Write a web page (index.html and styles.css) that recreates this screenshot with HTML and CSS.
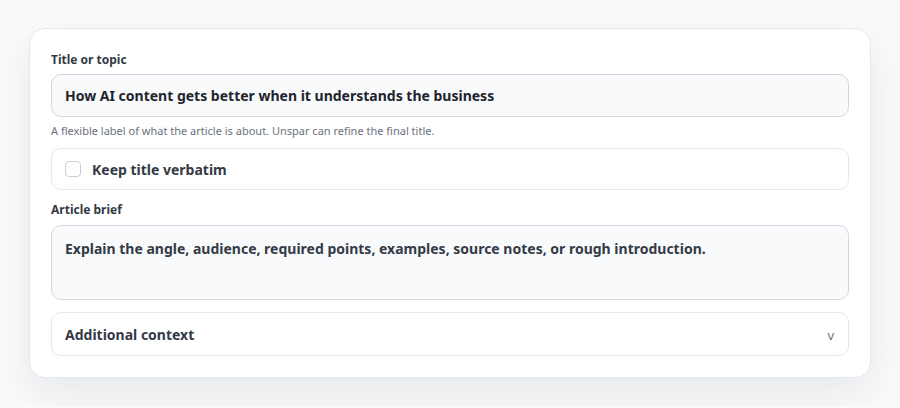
FILE: index.html
```html
<!DOCTYPE html>
<html lang="en">

<head>
    <meta charset="UTF-8">
    <meta name="viewport" content="width=device-width, initial-scale=1.0">
    <title>New article</title>

    <link rel="stylesheet" href="styles.css">
</head>

<body>
    <div class="card">
        <label class="label" for="title">Title or topic</label>
        <div class="input" id="title">How AI content gets better when it understands the business</div>
        <p class="help">A flexible label of what the article is about. Unspar can refine the final title.</p>

        <div class="box check-row">
            <span class="checkbox"></span>
            <span>Keep title verbatim</span>
        </div>

        <label class="label brief-label" for="brief">Article brief</label>
        <div class="input textarea" id="brief">Explain the angle, audience, required points, examples, source notes, or rough introduction.</div>

        <div class="box details">
            <span>Additional context</span>
            <span class="chevron">v</span>
        </div>
    </div>
</body>

</html>
```

FILE: styles.css
```css
* {
    margin: 0;
    padding: 0;
    box-sizing: border-box;
}

body {
    font-family: "Noto Sans", sans-serif;
    background-color: #fafafb;
    padding: 28px 29px;
    color: #2b303b;
}

.card {
    display: flex;
    flex-direction: column;
    background-color: #ffffff;
    border: 1px solid #e3e8f0;
    border-radius: 16px;
    padding: 23px 21px 21px;
    box-shadow: 0 16px 40px rgba(15, 23, 42, 0.08);
}

.label {
    display: block;
    font-size: 12px;
    font-weight: 700;
    line-height: 16px;
    color: #343944;
    margin-bottom: 6px;
}

.input {
    height: 43px;
    display: flex;
    align-items: center;
    padding: 0 13px;
    background-color: #f8fafc;
    border: 1px solid #d4d8de;
    border-radius: 10px;
    font-size: 14px;
    font-weight: 700;
    color: #1f242d;
}

.help {
    font-size: 11px;
    line-height: 18px;
    color: #6b717c;
    margin: 5px 0 8px;
}

.box {
    height: 42px;
    display: flex;
    align-items: center;
    padding: 0 13px;
    border: 1px solid #e6e8ec;
    border-radius: 10px;
    font-size: 14px;
    font-weight: 700;
    color: #343a46;
}

.check-row {
    gap: 11px;
}

.checkbox {
    width: 16px;
    height: 16px;
    border: 1px solid #c9ced5;
    border-radius: 4px;
    background-color: #ffffff;
}

.brief-label {
    margin-top: 12px;
    margin-bottom: 7px;
}

.textarea {
    height: 75px;
    align-items: flex-start;
    padding-top: 13px;
    color: #343a46;
}

.details {
    margin-top: 12px;
    height: 44px;
    padding-top: 1px;
    justify-content: space-between;
}

.chevron {
    font-size: 13px;
    font-weight: 400;
    color: #6b717c;
    margin-right: 1px;
}
```
